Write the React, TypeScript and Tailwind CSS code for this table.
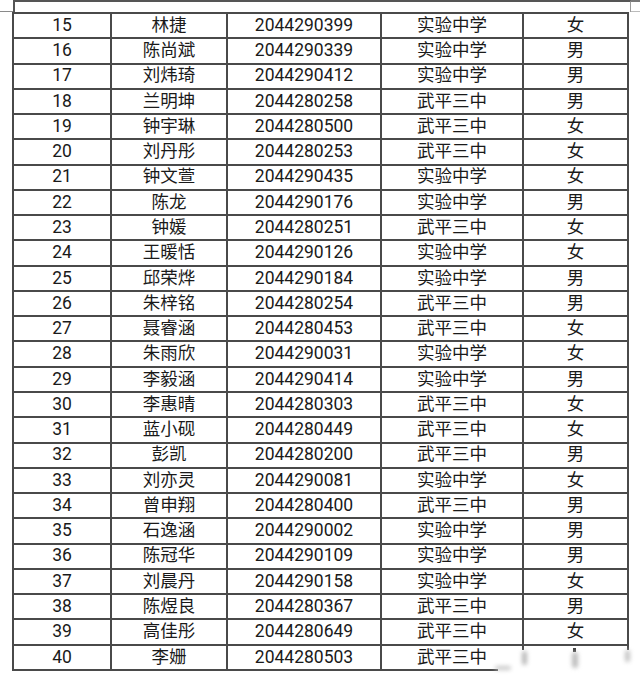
import React from "react"

type Row = [string, string, string, string, string]

const ROWS: Row[] = [
  ["15", "林捷", "2044290399", "实验中学", "女"],
  ["16", "陈尚斌", "2044290339", "实验中学", "男"],
  ["17", "刘炜琦", "2044290412", "实验中学", "男"],
  ["18", "兰明坤", "2044280258", "武平三中", "男"],
  ["19", "钟宇琳", "2044280500", "武平三中", "女"],
  ["20", "刘丹彤", "2044280253", "武平三中", "女"],
  ["21", "钟文萱", "2044290435", "实验中学", "女"],
  ["22", "陈龙", "2044290176", "实验中学", "男"],
  ["23", "钟媛", "2044280251", "武平三中", "女"],
  ["24", "王暖恬", "2044290126", "实验中学", "女"],
  ["25", "邱荣烨", "2044290184", "实验中学", "男"],
  ["26", "朱梓铭", "2044280254", "武平三中", "男"],
  ["27", "聂睿涵", "2044280453", "武平三中", "女"],
  ["28", "朱雨欣", "2044290031", "实验中学", "女"],
  ["29", "李毅涵", "2044290414", "实验中学", "男"],
  ["30", "李惠晴", "2044280303", "武平三中", "女"],
  ["31", "蓝小砚", "2044280449", "武平三中", "女"],
  ["32", "彭凯", "2044280200", "武平三中", "男"],
  ["33", "刘亦灵", "2044290081", "实验中学", "女"],
  ["34", "曾申翔", "2044280400", "武平三中", "男"],
  ["35", "石逸涵", "2044290002", "实验中学", "男"],
  ["36", "陈冠华", "2044290109", "实验中学", "男"],
  ["37", "刘晨丹", "2044290158", "实验中学", "女"],
  ["38", "陈煜良", "2044280367", "武平三中", "男"],
  ["39", "高佳彤", "2044280649", "武平三中", "女"],
  ["40", "李姗", "2044280503", "武平三中", "女"],
]

export default function App() {
  return (
    <div
      className="relative w-[640px] h-[689px] overflow-hidden bg-white text-[#1a1a1a]"
      style={{ fontFamily: 'Roboto, "Noto Sans CJK SC", sans-serif' }}
    >
      {/* cut-off strip of the row above */}
      <div className="flex h-[12px]">
        <div className="w-[13px] border-b border-[#8a8a8a]" />
        <div className="w-[618px] border-t-2 border-l-2 border-r border-[#555] border-r-[#9a9a9a]" />
        <div className="flex-1 border-t-2 border-b border-[#777] border-b-[#bbb]" />
      </div>

      {/* table */}
      <div className="ml-[12px] w-[617px] border-l-2 border-t-2 border-[#4a4a4a]">
        {ROWS.map((r) => (
          <div
            key={r[0]}
            className="grid h-[25.27px] grid-cols-[98px_116px_154px_142px_105px] border-b-2 border-[#4a4a4a] text-[17.5px] leading-none"
          >
            {r.map((c, i) => (
              <div
                key={i}
                className="flex items-center justify-center border-r-2 border-[#4a4a4a]"
              >
                {c}
              </div>
            ))}
          </div>
        ))}
      </div>

      {/* watermark over the bottom right */}
      <div className="absolute left-[498px] top-[650px] h-[39px] w-[142px] bg-white" />
      <div className="absolute left-[495px] top-[666px] h-[4px] w-[16px] rounded-full bg-[#c8c8c8] blur-[2px]" />
      <div className="absolute left-[522px] top-[651px] h-[14px] w-[5px] rounded-full bg-[#b8b8b8] blur-[2px]" />
      <div className="absolute left-[573px] top-[648px] h-[4px] w-[3px] bg-[#444]" />
      <div className="absolute left-[572px] top-[652px] h-[16px] w-[6px] rounded-full bg-[#bcbcbc] blur-[2px]" />
      <div className="absolute left-[625px] top-[650px] h-[12px] w-[5px] rounded-full bg-[#c4c4c4] blur-[2px]" />
    </div>
  )
}
